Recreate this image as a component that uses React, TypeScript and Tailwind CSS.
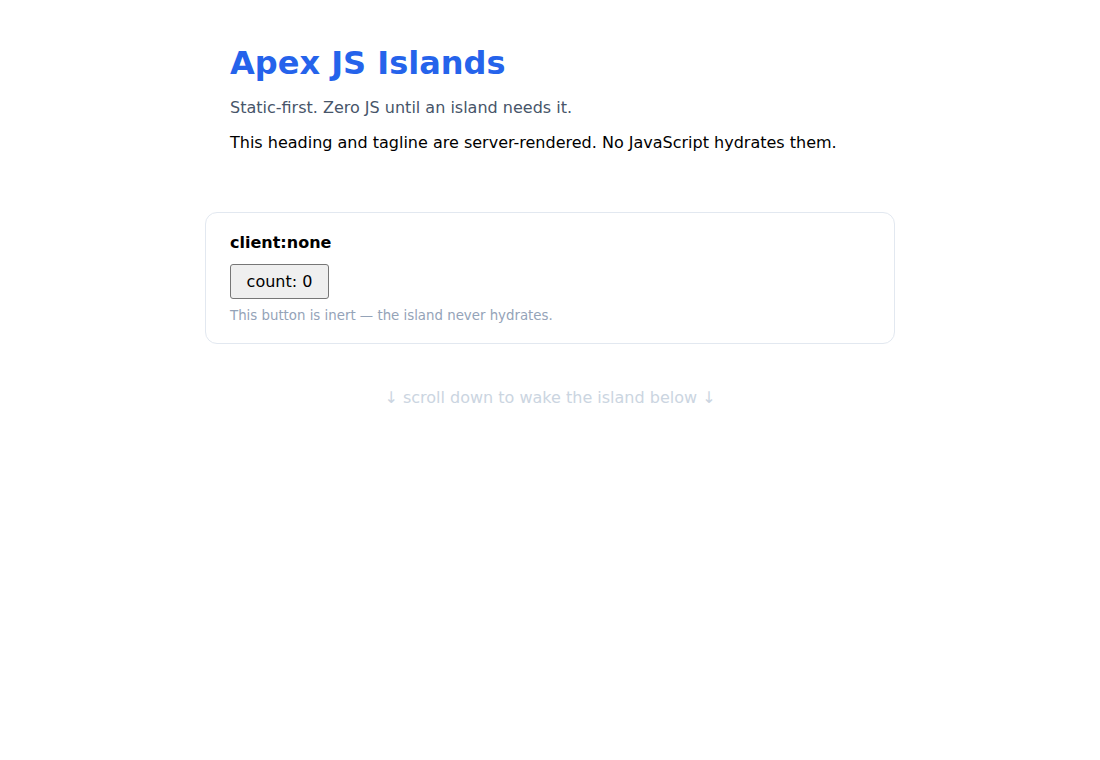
export default function App() {
  return (
    <div
      className="min-h-[760px] bg-white text-black"
      style={{ fontFamily: '"DejaVu Sans", Verdana, sans-serif' }}
    >
      <main className="mx-auto max-w-[690px]">
        <header className="px-[25px] pt-[44px]">
          <h1 className="text-[32px] font-bold leading-[1.2] text-[#2563eb]">Apex JS Islands</h1>
          <p className="mt-[14px] text-base leading-6 text-[#475569]">
            Static-first. Zero JS until an island needs it.
          </p>
          <p className="mt-[11px] text-base leading-6">
            This heading and tagline are server-rendered. No JavaScript hydrates them.
          </p>
        </header>

        <section className="mt-[57px] rounded-xl border border-[#e2e8f0] px-6 pt-[18px] pb-[17px]">
          <h2 className="text-base font-bold leading-6">client:none</h2>
          <button
            type="button"
            className="mt-[9px] flex h-[35px] w-[99px] items-center justify-center rounded-[3px] border border-[#767676] bg-[#efefef] text-base text-black"
          >
            count: 0
          </button>
          <p className="mt-[7px] text-[13.33px] leading-5 text-[#94a3b8]">
            This button is inert — the island never hydrates.
          </p>
        </section>

        <p className="mt-[42px] text-center text-base leading-6 text-[#cbd5e1]">
          ↓ scroll down to wake the island below ↓
        </p>
      </main>
    </div>
  );
}
